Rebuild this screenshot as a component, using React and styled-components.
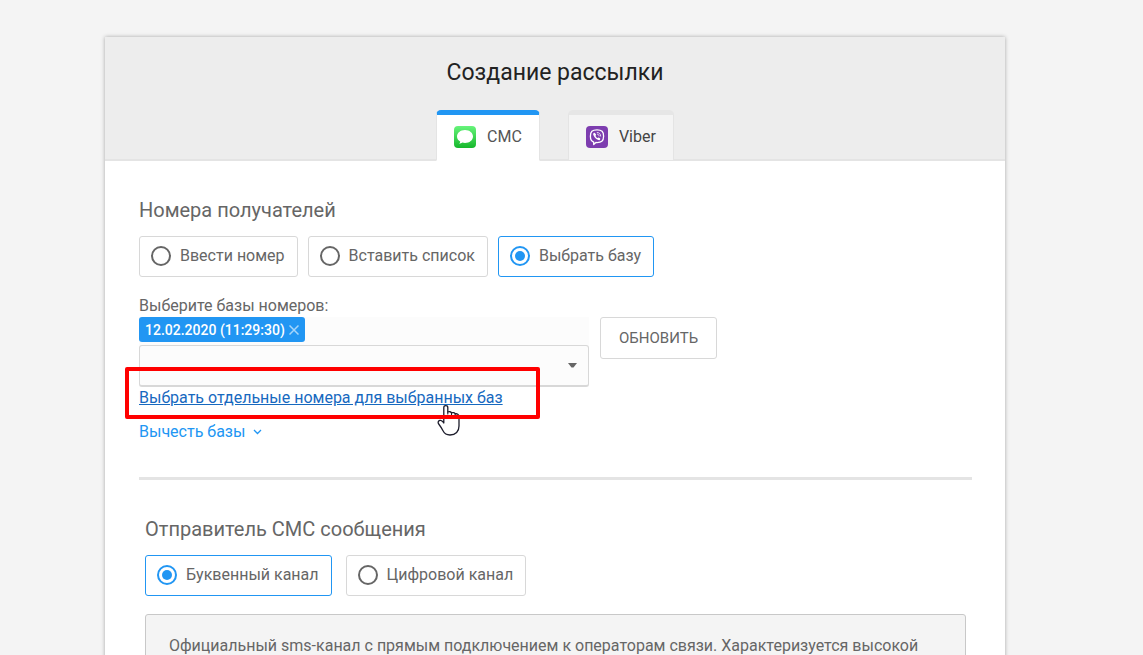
import React, { useState } from "react";
import styled, { createGlobalStyle, css } from "styled-components";

const GlobalStyle = createGlobalStyle`
  *, *::before, *::after { box-sizing: border-box; }
  body {
    margin: 0;
    background: #f4f4f4;
    color: #666;
    font-family: Roboto, "Liberation Sans", sans-serif;
    font-size: 16px;
    line-height: 24px;
  }
  button, input, select { font: inherit; color: inherit; }
`;

const Page = styled.div`
  height: 100vh;
  overflow: hidden;
  padding: 37px 33px 0 0;
`;

const Card = styled.main`
  width: 100%;
  max-width: 900px;
  min-height: 100%;
  margin: 0 auto;
  background: #fff;
  box-shadow: 0 0 4px rgba(0, 0, 0, 0.32);
`;

const Header = styled.header`
  display: flex;
  flex-direction: column;
  align-items: center;
  gap: 21px;
  padding-top: 20px;
  background: #ededed;
  box-shadow: inset 0 -2px #e4e4e4;
`;

const Title = styled.h1`
  margin: 0;
  font-size: 23px;
  font-weight: 400;
  line-height: 32px;
  color: #222;
`;

const Tabs = styled.nav`
  display: flex;
  gap: 28px;
`;

const Tab = styled.button`
  display: flex;
  align-items: center;
  gap: 11px;
  height: 51px;
  padding: 0 17px 2px;
  border: 1px solid #e4e4e4;
  border-top: 5px solid #e6e6e6;
  border-bottom: 1px solid #e4e4e4;
  border-radius: 5px 5px 0 0;
  background: #f4f4f4;
  color: #444;
  cursor: pointer;
  ${(p) => p.$active && css`
    border-top-color: #2196f3;
    border-bottom-color: #fff;
    background: #fff;
    color: #555;
  `}
`;

const Content = styled.div`
  padding: 37px 33px 0 34px;
`;

const Section = styled.section`
  padding: 0 ${(p) => (p.$inset ? "6px" : "0")};
`;

const SectionTitle = styled.h2`
  margin: 0 0 14px;
  font-size: 20px;
  font-weight: 400;
  line-height: 24px;
`;

const Options = styled.div`
  display: flex;
  gap: ${(p) => p.$gap}px;
`;

const Option = styled.label`
  display: flex;
  align-items: center;
  gap: 9px;
  height: 41px;
  padding: 0 12px 2px 11px;
  border: 1px solid #d8d8d8;
  border-radius: 3px;
  cursor: pointer;
  &:has(input:checked) { border-color: #2196f3; }
`;

const Radio = styled.input`
  appearance: none;
  display: grid;
  place-items: center;
  width: 20px;
  height: 20px;
  margin: 0;
  border: 2px solid #666;
  border-radius: 50%;
  &:checked { border-color: #2196f3; }
  &:checked::before {
    content: "";
    width: 10px;
    height: 10px;
    border-radius: 50%;
    background: #2196f3;
  }
`;

const Picker = styled.div`
  position: relative;
  margin-top: 17px;
`;

const PickerLabel = styled.label`
  display: block;
  line-height: 23px;
`;

const PickerRow = styled.div`
  display: flex;
  align-items: flex-start;
  gap: 11px;
`;

const Bases = styled.div`
  flex: 0 1 450px;
  background: #fcfcfc;
`;

const Chip = styled.span`
  display: flex;
  align-items: center;
  gap: 4px;
  width: fit-content;
  height: 25px;
  margin-bottom: 3px;
  padding: 0 6px;
  border-radius: 3px;
  background: #2196f3;
  color: #fff;
  font-size: 14px;
  font-weight: 500;
`;

const ChipRemove = styled.button`
  display: flex;
  padding: 0;
  border: 0;
  background: none;
  cursor: pointer;
`;

const SelectWrap = styled.div`
  display: grid;
  align-items: center;
  & > * { grid-area: 1 / 1; }
  & > svg { justify-self: end; margin: 0 12px 2px 0; pointer-events: none; }
`;

const Select = styled.select`
  appearance: none;
  width: 100%;
  height: 42px;
  padding: 0 32px 0 12px;
  border: 1px solid #d8d8d8;
  border-bottom-width: 2px;
  border-radius: 3px;
  background: #fcfcfc;
`;

const RefreshButton = styled.button`
  height: 42px;
  padding: 0 18px;
  border: 1px solid #d8d8d8;
  border-radius: 3px;
  background: #fff;
  font-size: 15px;
  cursor: pointer;
`;

const Link = styled.a`
  display: block;
  width: fit-content;
  line-height: 22px;
  color: #1769bf;
  text-decoration: underline;
`;

const SubtractLink = styled.a`
  display: flex;
  align-items: center;
  gap: 8px;
  width: fit-content;
  margin-top: 11px;
  color: #2196f3;
  text-decoration: none;
`;

const Highlight = styled.div`
  position: absolute;
  left: -14px;
  top: 73px;
  width: 415px;
  height: 52px;
  border: 4px solid #ff0000;
  border-radius: 2px;
  pointer-events: none;
`;

const Pointer = styled.svg`
  position: absolute;
  left: 298px;
  top: 109px;
  pointer-events: none;
`;

const Divider = styled.hr`
  height: 3px;
  margin: 33px 0 37px;
  border: 0;
  background: #e4e4e4;
`;

const Info = styled.p`
  min-height: 90px;
  margin: 18px 0 0;
  padding: 19px 23px;
  border: 1px solid #c8c8c8;
  border-radius: 3px;
  background: #f4f4f4;
`;

const SmsIcon = () => (
  <svg width="22" height="22" viewBox="0 0 22 22" aria-hidden="true">
    <defs>
      <linearGradient id="sms" x1="0" y1="0" x2="0" y2="1">
        <stop offset="0" stopColor="#67f47b" />
        <stop offset="1" stopColor="#16b72c" />
      </linearGradient>
    </defs>
    <rect width="22" height="22" rx="4" fill="url(#sms)" />
    <path fill="#fff" d="M11 4c4.500 0 8 2.900 8 6.500S15.500 17 11 17c-1 0-1.900-.1-2.700-.4-.8.700-1.900 1.200-3.100 1.200.6-.6 1-1.400 1-2.200C4.200 14.400 3 12.600 3 10.500 3 6.900 6.500 4 11 4z" />
  </svg>
);

const ViberIcon = () => (
  <svg width="22" height="22" viewBox="0 0 22 22" fill="none" aria-hidden="true">
    <rect width="22" height="22" rx="4" fill="#7d3daf" />
    <path d="M11 3.800c-4.800 0-6.600 1.700-6.600 6.500 0 3.300.9 5 3.300 5.900v2.300l2.200-2c5.700.3 7.700-1.300 7.700-6.200 0-4.800-1.800-6.500-6.600-6.500z" stroke="#fff" strokeWidth="1.300" strokeLinejoin="round" />
    <path d="M8.100 6.700c-1.200.6-1.100 1.700-.5 2.900 1 2.200 2.500 3.700 4.700 4.500 1 .4 1.700-.2 2-1.100.2-.6-1.500-1.700-1.900-1.500l-.7.600c-1-.3-1.900-1.200-2.200-2.300l.6-.7c.3-.5-1.300-2.600-2-2.400z" fill="#fff" />
    <path d="M11.200 6.500c2.200.1 3.400 1.300 3.500 3.600M11.500 8.200c1 .1 1.500.7 1.600 1.700" stroke="#fff" strokeWidth=".8" strokeLinecap="round" />
  </svg>
);

const HandPointer = () => (
  <Pointer width="24" height="34" viewBox="0 0 24 34" aria-hidden="true">
    <path d="M6.800 20V4.500c0-2.400 4-2.400 4 0V9c1.300-.6 3.200-.4 3.700.9 1.300-.6 3.200-.2 3.700 1 1.800-.5 3.800.7 3.800 2.600V23c0 5.500-3.300 9-9 9-3.600 0-5.600-1.400-7-4.200-1-2-2-3.800-4.300-6.800-1.300-2 0-4 2-3.600 1.400.2 2.300 1.200 3.100 2.600z" fill="#fff" stroke="#1c1c2b" strokeWidth="1.300" strokeLinejoin="round" />
    <path d="M10.800 9v2M14.500 10v2M18.200 11v2" stroke="#1c1c2b" strokeWidth="1.100" strokeLinecap="round" />
  </Pointer>
);

function RadioGroup({ name, options, initial, gap }) {
  const [value, setValue] = useState(initial);
  return (
    <Options $gap={gap}>
      {options.map((text) => (
        <Option key={text}>
          <Radio type="radio" name={name} checked={value === text} onChange={() => setValue(text)} />
          {text}
        </Option>
      ))}
    </Options>
  );
}

export default function App() {
  return (
    <Page>
      <GlobalStyle />
      <Card>
        <Header>
          <Title>Создание рассылки</Title>
          <Tabs>
            <Tab type="button" $active><SmsIcon />СМС</Tab>
            <Tab type="button"><ViberIcon />Viber</Tab>
          </Tabs>
        </Header>
        <Content>
          <Section>
            <SectionTitle>Номера получателей</SectionTitle>
            <RadioGroup name="recipients" gap={10} initial="Выбрать базу" options={["Ввести номер", "Вставить список", "Выбрать базу"]} />
            <Picker>
              <PickerLabel htmlFor="bases">Выберите базы номеров:</PickerLabel>
              <PickerRow>
                <Bases>
                  <Chip>
                    12.02.2020 (11:29:30)
                    <ChipRemove type="button" aria-label="Удалить">
                      <svg width="10" height="10" viewBox="0 0 10 10" stroke="#a6d5fa" strokeWidth="1.500"><path d="M.5.5l9 9M9.500.5l-9 9" /></svg>
                    </ChipRemove>
                  </Chip>
                  <SelectWrap>
                    <Select id="bases" defaultValue=""><option value="" /></Select>
                    <svg width="9" height="5" viewBox="0 0 9 5"><path d="M0 0h9L5.500 4.500h-2z" fill="#666" /></svg>
                  </SelectWrap>
                </Bases>
                <RefreshButton type="button">ОБНОВИТЬ</RefreshButton>
              </PickerRow>
              <Link href="#numbers">Выбрать отдельные номера для выбранных баз</Link>
              <SubtractLink href="#subtract">
                Вычесть базы
                <svg width="9" height="6" viewBox="0 0 9 6" fill="none" stroke="#2196f3" strokeWidth="1.300"><path d="M1 1l3.500 3.500L8 1" /></svg>
              </SubtractLink>
              <HandPointer />
              <Highlight />
            </Picker>
          </Section>
          <Divider />
          <Section $inset>
            <SectionTitle>Отправитель СМС сообщения</SectionTitle>
            <RadioGroup name="channel" gap={14} initial="Буквенный канал" options={["Буквенный канал", "Цифровой канал"]} />
            <Info>Официальный sms-канал с прямым подключением к операторам связи. Характеризуется высокой</Info>
          </Section>
        </Content>
      </Card>
    </Page>
  );
}
